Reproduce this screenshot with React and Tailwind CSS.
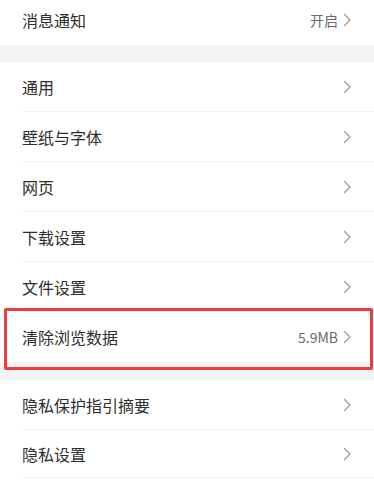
import React from 'react';

const font = { fontFamily: '"Noto Sans CJK SC", "Noto Sans", sans-serif' };

function Chevron() {
  return (
    <svg width="9" height="14" viewBox="0 0 9 14" className="ml-[5px]">
      <path d="M1.5 1.5 L7 7 L1.5 12.5" fill="none" stroke="#9a9a9a" strokeWidth="1.3" strokeLinecap="round" strokeLinejoin="round" />
    </svg>
  );
}

function Row({ label, value, h = 'h-[50px]', divider = true }) {
  return (
    <div className={`${h} flex items-center pl-[22px] pr-[22px] relative bg-white`}>
      <span className="text-[16px] text-[#2e2e2e] flex-1 leading-none">{label}</span>
      {value && <span className="text-[14px] text-[#6a6a6a] leading-none">{value}</span>}
      <Chevron />
      {divider && <div className="absolute left-[22px] right-0 bottom-0 h-px bg-[#f0f0f0]" />}
    </div>
  );
}

export default function App() {
  return (
    <div className="w-[374px] h-[480px] overflow-hidden bg-white relative" style={font}>
      <div className="h-[45px] flex items-center pl-[22px] pr-[22px] pb-[5px] bg-white">
        <span className="text-[16px] text-[#2e2e2e] flex-1 leading-none">消息通知</span>
        <span className="text-[14px] text-[#6a6a6a] leading-none">开启</span>
        <Chevron />
      </div>
      <div className="h-[17px] bg-[#f4f4f4]" />
      <Row label="通用" />
      <Row label="壁纸与字体" />
      <Row label="网页" />
      <Row label="下载设置" />
      <Row label="文件设置" />
      <Row label="清除浏览数据" value="5.9MB" divider={false} />
      <div className="h-[18px] bg-[#f4f4f4]" />
      <Row label="隐私保护指引摘要" />
      <Row label="隐私设置" h="h-[48px]" />
      <div className="absolute left-[4px] top-[308px] w-[369px] h-[62px] border-[3px] border-[#e8403f] rounded-[2px] pointer-events-none" />
    </div>
  );
}
